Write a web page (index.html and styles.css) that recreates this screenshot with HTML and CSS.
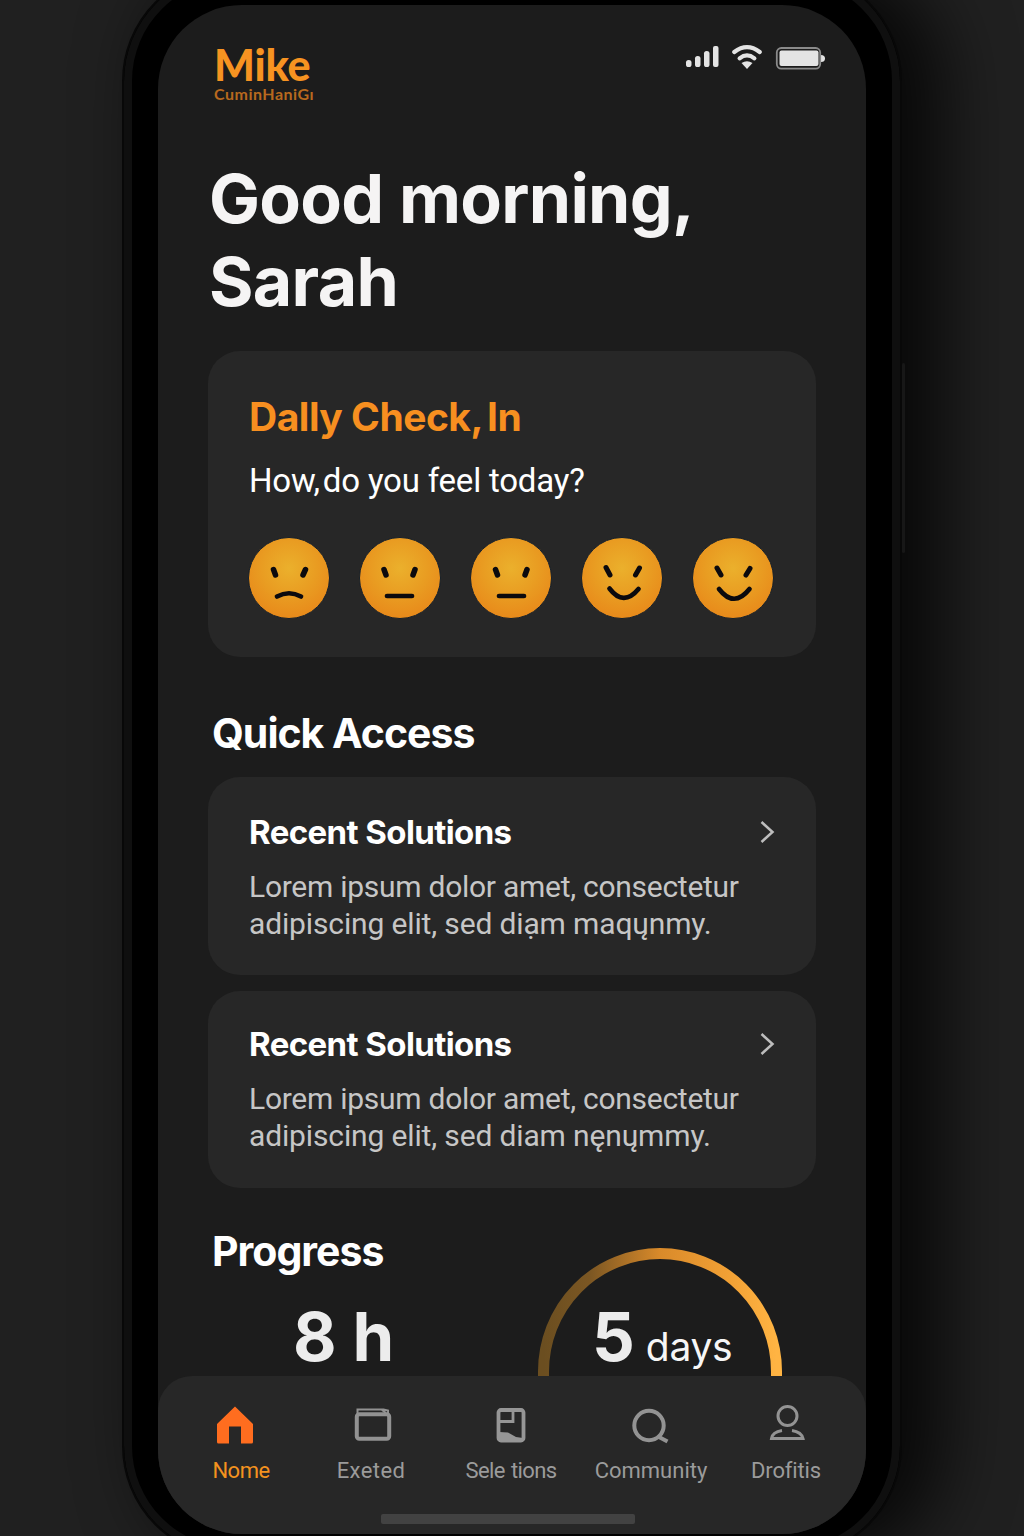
FILE: index.html
```html
<!DOCTYPE html>
<html lang="en">
<head>
<meta charset="utf-8">
<title>Mike</title>
<link rel="stylesheet" href="styles.css">
</head>
<body>
<div class="phone">
  <span class="side-button"></span>
  <main class="screen">
    <header class="topbar">
      <div class="brand">
        <span class="brand-name">Mike</span>
        <span class="brand-sub">CuminHaniGı</span>
      </div>
      <svg class="status" width="142" height="30" viewBox="0 0 142 30">
        <g fill="#e4e4e4">
          <rect x="2" y="17" width="5.500" height="7" rx="2.600"/>
          <rect x="11" y="13" width="5.500" height="11" rx="2.600"/>
          <rect x="20" y="8" width="5.500" height="16" rx="2.600"/>
          <rect x="29" y="3" width="5.500" height="21" rx="2"/>
          <rect x="95.500" y="7.500" width="39" height="15.500" rx="2"/>
          <path d="M137 12q4 0 4 3.500t-4 3.500z"/>
          <path d="M57.500 20q5.500-3.600 11 0L63 26z"/>
        </g>
        <g fill="none" stroke="#e4e4e4" stroke-width="4.200" stroke-linecap="round">
          <path d="M50.300 9Q63 -.800 75.700 9"/>
          <path d="M55.600 15.300Q63 9.600 70.400 15.300"/>
        </g>
        <rect x="92.800" y="5" width="43.400" height="20.600" rx="4.500" fill="none" stroke="#8a8a8a" stroke-width="1.800"/>
      </svg>
    </header>

    <h1 class="greeting">Good morning,<br>Sarah</h1>

    <section class="card checkin">
      <h2 class="checkin-title">Dally Check,<span class="tight">In</span></h2>
      <p class="checkin-question">How,<span class="tight-q">do you feel today?</span></p>
      <div class="moods">
        <svg class="mood" viewBox="0 0 82 82">
          <defs>
            <radialGradient id="face" cx=".5" cy=".38" r=".6">
              <stop offset="0" stop-color="#ebb02c"/>
              <stop offset=".55" stop-color="#e99d22"/>
              <stop offset="1" stop-color="#e88b1b"/>
            </radialGradient>
          </defs>
          <circle cx="41" cy="41" r="40.500" fill="url(#face)" stroke="#16202b"/>
          <path class="ink" d="M25.500 32.500l2 5.500M57.500 32.500l-2.500 5.500"/>
          <path class="ink mouth" d="M29 59.500q12-6.500 24 0"/>
        </svg>
        <svg class="mood" viewBox="0 0 82 82">
          <circle cx="41" cy="41" r="40.500" fill="url(#face)" stroke="#16202b"/>
          <path class="ink" d="M25 32.500l2 5.500M56 32.500l-2 5.500"/>
          <path class="ink mouth" d="M28 59h25"/>
        </svg>
        <svg class="mood" viewBox="0 0 82 82">
          <circle cx="41" cy="41" r="40.500" fill="url(#face)" stroke="#16202b"/>
          <path class="ink" d="M25.500 32.500l2 5.500M57 32.500l-2 5.500"/>
          <path class="ink mouth" d="M29 59h25"/>
        </svg>
        <svg class="mood" viewBox="0 0 82 82">
          <circle cx="41" cy="41" r="40.500" fill="url(#face)" stroke="#16202b"/>
          <path class="ink thin" d="M25 30.500l4 7.500M58.500 31l-4 7"/>
          <path class="ink mouth" d="M28.500 51.500q14 18.500 29 .5"/>
        </svg>
        <svg class="mood" viewBox="0 0 82 82">
          <circle cx="41" cy="41" r="40.500" fill="url(#face)" stroke="#16202b"/>
          <path class="ink thin" d="M25 31l4 7M58 31.500l-4 6.500"/>
          <path class="ink mouth" d="M27 52q15 19.500 30.500 0"/>
        </svg>
      </div>
    </section>

    <h2 class="section-title quick">Quick Access</h2>
    <section class="card link-card">
      <div class="link-head">
        <h3 class="link-title">Recent Solutions</h3>
        <svg class="chevron" viewBox="0 0 16 24"><path d="M2.500 2l11 10-11 10"/></svg>
      </div>
      <p class="link-text"><span class="line first">Lorem ipsum dolor amet, consectetur</span><span class="line">adipiscing elit, sed diạm maqųnmy.</span></p>
    </section>
    <section class="card link-card second">
      <div class="link-head">
        <h3 class="link-title">Recent Solutions</h3>
        <svg class="chevron" viewBox="0 0 16 24"><path d="M2.500 2l11 10-11 10"/></svg>
      </div>
      <p class="link-text"><span class="line first">Lorem ipsum dolor amet, consectetur</span><span class="line">adipiscing elit, sed diam nęnųmmy.</span></p>
    </section>

    <section class="progress">
      <div class="progress-left">
        <h2 class="section-title">Progress</h2>
        <p class="stat">8 h</p>
      </div>
      <div class="ring">
        <svg class="ring-arc" width="246" height="140" viewBox="0 0 246 140">
          <defs>
            <linearGradient id="arc" x1="0" y1=".6" x2="1" y2=".6">
              <stop offset="0" stop-color="#6b4e20"/>
              <stop offset=".2" stop-color="#7c5723"/>
              <stop offset=".5" stop-color="#d98a2a"/>
              <stop offset=".8" stop-color="#f2a135"/>
              <stop offset="1" stop-color="#ffb443"/>
            </linearGradient>
          </defs>
          <path d="M6.500 131V124.500a116.500 118 0 0 1 233 0V131" fill="none" stroke="url(#arc)" stroke-width="11"/>
        </svg>
        <p class="stat ring-label">5<span class="unit">days</span></p>
      </div>
    </section>

    <nav class="tabs">
      <a class="tab active">
        <svg width="40" height="40" viewBox="0 0 40 40"><path fill="#ff6d1f" d="M20 1.500L38 19v18q0 1.500-1.500 1.500H26V21.500H14v17H3.500Q2 38.500 2 37V19z"/></svg>
        <span class="t1">Nome</span>
      </a>
      <a class="tab wallet">
        <svg width="40" height="40" viewBox="0 0 40 40" fill="none" stroke="#929292"><rect x="3.800" y="9.300" width="32.400" height="24.400" rx="2.500" stroke-width="4"/><path stroke-width="2" d="M4.500 8.500V4.500h26l4.500 1V9M29 5l4 3"/></svg>
        <span class="t2">Exeted</span>
      </a>
      <a class="tab selections">
        <svg width="40" height="40" viewBox="0 0 40 40"><rect x="7.500" y="5" width="25" height="30.500" rx="2.500" fill="none" stroke="#969696" stroke-width="3.800"/><path d="M9 16.500h13V5" fill="none" stroke="#969696" stroke-width="2.800"/><path d="M8 27l9 .5 8 4.500 7 1V37H8z" fill="#969696"/></svg>
        <span class="t3">Sele tions</span>
      </a>
      <a class="tab community">
        <svg width="40" height="40" viewBox="0 0 40 40" fill="none" stroke="#939393" stroke-width="4"><circle cx="18" cy="20.500" r="14.700"/><path d="M27 31.500l9.500 5"/></svg>
        <span class="t4">Community</span>
      </a>
      <a class="tab profile">
        <svg width="40" height="40" viewBox="0 0 40 40" fill="none" stroke="#939393" stroke-width="3"><circle cx="21.500" cy="11" r="9.500"/><path d="M16 25.500Q6.500 27 5.500 33.500h31.500Q35.500 27 26 25.500"/></svg>
        <span class="t5">Drofitis</span>
      </a>
      <span class="home-indicator"></span>
    </nav>
  </main>
</div>
</body>
</html>
```
FILE: styles.css
```css
* { box-sizing: border-box; margin: 0; padding: 0; }

body {
  width: 1024px;
  height: 1536px;
  overflow: hidden;
  background: #202020;
  font-family: Roboto, "Liberation Sans", sans-serif;
  display: flex;
}

.phone {
  position: relative;
  flex: none;
  width: 780px;
  height: 1589px;
  margin: -31px 0 0 122px;
  padding: 34px 34px 0;
  border: 2px solid #080808;
  border-radius: 112px;
  background: #000;
  box-shadow: inset 0 0 0 8px #0f0f0f, 34px 0 70px 6px rgba(0, 0, 0, .75);
}

.side-button {
  position: absolute;
  right: -5px;
  top: 392px;
  width: 3px;
  height: 190px;
  border-radius: 2px;
  background: #171717;
}

.screen {
  display: flex;
  flex-direction: column;
  width: 708px;
  height: 1529px;
  border-radius: 84px;
  overflow: hidden;
  background: #1c1c1c;
  color: #fff;
}

.topbar {
  display: flex;
  justify-content: space-between;
  height: 152px;
  padding: 38px 40px 0 56px;
}

.brand { display: flex; flex-direction: column; color: #f79321; }
.brand-name { font: 900 43px/43px Lato, sans-serif; letter-spacing: -.2px; }
.brand-sub { font: 700 16px/16px Lato, sans-serif; letter-spacing: .5px; color: #b8691e; }

.greeting {
  padding-left: 51px;
  font: 650 68px/83px Inter, sans-serif;
  letter-spacing: -.7px;
  color: #f5f4f4;
  height: 194px;
}

.card {
  margin: 0 50px;
  border-radius: 32px;
  background: #272727;
}

.checkin { height: 307px; padding: 42px 42px 0 40px; }
.checkin-title { font: 650 39px/48px Inter, sans-serif; letter-spacing: -.5px; color: #f78f20; }
.tight { margin-left: 4px; }
.checkin-question { margin-top: 20px; font-size: 33px; line-height: 40px; letter-spacing: -.2px; }
.tight-q { margin-left: 3px; }
.checkin-title, .checkin-question { padding-left: 1px; }
.moods { display: flex; justify-content: space-between; margin-top: 36px; }
.mood { width: 82px; height: 82px; }
.ink { fill: none; stroke: #0b0a0e; stroke-width: 5.500; stroke-linecap: round; }
.thin { stroke-width: 5; }
.mouth { stroke-width: 4.700; }

.section-title { font: 650 41px/50px Inter, sans-serif; letter-spacing: -1px; padding-left: 54px; }
.quick { margin-top: 51px; margin-bottom: 18px; }

.link-card { height: 198px; margin-top: 1px; padding: 34px 41px 0; }
.link-card.second { height: 197px; margin-top: 16px; padding-top: 32px; }
.link-head { display: flex; justify-content: space-between; align-items: center; height: 42px; }
.link-title { font: 650 33px/42px Inter, sans-serif; letter-spacing: -.6px; }
.chevron { width: 16px; height: 24px; }
.chevron path { fill: none; stroke: #bdbdbd; stroke-width: 2.500; }
.link-text { margin-top: 15px; font-size: 30px; line-height: 37px; letter-spacing: -.14px; color: #c6c6c6; }
.line { display: block; white-space: nowrap; }
.first { letter-spacing: -.27px; }

.progress { display: flex; height: 188px; padding-top: 38px; }
.progress-left { width: 379px; }
.stat { font: 650 67px/80px Inter, sans-serif; color: #ececec; }
.progress-left .stat { padding-left: 135px; margin-top: 21px; }
.ring { position: relative; width: 246px; margin-top: 21px; }
.ring-arc { display: block; }
.ring-label { position: absolute; left: 55px; top: 50px; display: flex; align-items: baseline; }
.unit { margin-left: 11px; font-size: 39px; font-weight: 400; letter-spacing: -.3px; color: #f6f6f6; }

.tabs {
  position: relative;
  display: flex;
  height: 158px;
  padding: 29px 10px 0 18px;
  border-radius: 34px 34px 0 0;
  background: #272727;
}
.tab {
  display: flex;
  flex-direction: column;
  align-items: center;
  gap: 12px;
  width: 130px;
  font-size: 22px;
  line-height: 28px;
  color: #9b9b9b;
  white-space: nowrap;
}
.active { color: #f3921f; letter-spacing: -.5px; }
.active svg { margin-right: 12px; }
.wallet { letter-spacing: .4px; }
.wallet svg { margin-left: 4px; }
.selections { width: 150px; letter-spacing: -.65px; word-spacing: 1.500px; }
.profile { width: 140px; letter-spacing: -.15px; }
.home-indicator {
  position: absolute;
  left: 223px;
  bottom: 10px;
  width: 254px;
  height: 10px;
  border-radius: 2px;
  background: #424242;
}
```
